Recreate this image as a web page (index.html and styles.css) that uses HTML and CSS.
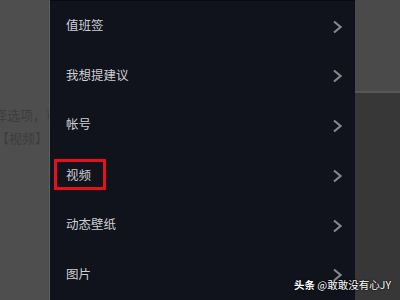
FILE: index.html
```html
<!DOCTYPE html>
<html>
<head>
<meta charset="utf-8">
<link rel="stylesheet" href="styles.css">
</head>
<body>
<div class="screen">
  <div class="side-left">
    <p class="bg-line l1">择选项，可以</p>
    <p class="bg-line l2">【视频】对</p>
  </div>
  <div class="panel">
    <div class="row"><span class="label">值班签</span><svg class="chev" viewBox="0 0 10 14"><polyline points="2,1.5 8.5,7 2,12.5"/></svg></div>
    <div class="row"><span class="label">我想提建议</span><svg class="chev" viewBox="0 0 10 14"><polyline points="2,1.5 8.5,7 2,12.5"/></svg></div>
    <div class="row"><span class="label">帐号</span><svg class="chev" viewBox="0 0 10 14"><polyline points="2,1.5 8.5,7 2,12.5"/></svg></div>
    <div class="row"><span class="label marked">视频</span><svg class="chev" viewBox="0 0 10 14"><polyline points="2,1.5 8.5,7 2,12.5"/></svg></div>
    <div class="row"><span class="label">动态壁纸</span><svg class="chev" viewBox="0 0 10 14"><polyline points="2,1.5 8.5,7 2,12.5"/></svg></div>
    <div class="row"><span class="label">图片</span><svg class="chev" viewBox="0 0 10 14"><polyline points="2,1.5 8.5,7 2,12.5"/></svg></div>
  </div>
  <div class="side-right">
    <div class="sr-top"></div>
    <div class="sr-bottom"></div>
  </div>
  <div class="watermark"><b>头条</b> @敢敢没有心JY</div>
</div>
</body>
</html>
```
FILE: styles.css
```css
html, body {
  margin: 0;
  padding: 0;
  width: 400px;
  height: 300px;
  overflow: hidden;
  background: #4d4d4d;
  font-family: "Noto Sans CJK SC", "Noto Sans", sans-serif;
}
.screen {
  position: relative;
  display: flex;
  width: 400px;
  height: 300px;
}
.side-left {
  width: 49px;
  flex: none;
  background: #4e4e4e;
  border-right: 1px solid #5e5e5e;
  overflow: hidden;
  padding-top: 103px;
}
.bg-line {
  margin: 0;
  white-space: nowrap;
  font-size: 13px;
  line-height: 23px;
  color: #3d3d3d;
}
.l1 { margin-left: -6px; }
.l2 { margin-left: -4px; }
.panel {
  width: 305px;
  flex: none;
  background: #11131c;
  border-top: 1px solid #090a10;
  box-sizing: border-box;
  display: flex;
  flex-direction: column;
}
.row {
  height: 49.8px;
  flex: none;
  display: flex;
  align-items: center;
  justify-content: space-between;
  padding: 0 13px 0 16px;
}
.row:first-child { height: 48.8px; }
.label {
  font-size: 12.5px;
  color: #cdced2;
  line-height: 14px;
}
.label.marked {
  margin-left: -12px;
  border: 3px solid #e4111f;
  padding: 6px 12px 5px 9px;
}
.chev {
  width: 10px;
  height: 14px;
  margin-top: 3px;
  fill: none;
  stroke: #85868c;
  stroke-width: 2.2;
}
.side-right {
  flex: 1;
  display: flex;
  flex-direction: column;
}
.sr-top {
  height: 91px;
  background: #4a4a4a;
  border-bottom: 2px solid #565656;
}
.sr-bottom {
  flex: 1;
  background: #373737;
}
.watermark {
  position: absolute;
  left: 294px;
  top: 277px;
  font-size: 10.5px;
  line-height: 16px;
  color: #ffffff;
  white-space: nowrap;
  text-shadow: 0 0 2px #000, 0 0 1px #000;
}
.watermark b { font-weight: 700; }
```
